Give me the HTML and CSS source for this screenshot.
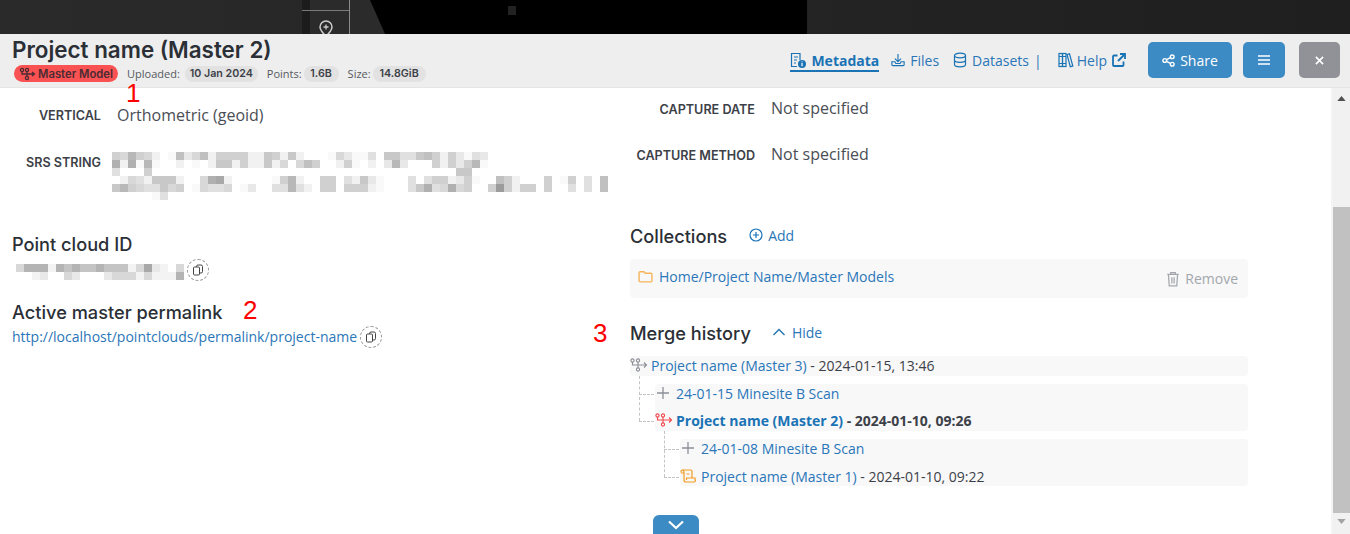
FILE: index.html
```html
<!DOCTYPE html>
<html lang="en">
<head>
<meta charset="utf-8">
<title>Project name</title>
<link rel="stylesheet" href="styles.css">
</head>
<body>
<div class="canvas">
  <div class="tool-strip">
    <svg class="pin" viewBox="0 0 14 18" width="14" height="18"><path d="M7 1a6 6 0 0 0-6 6c0 3.500 3.500 6.500 6 9.500 2.500-3 6-6 6-9.500a6 6 0 0 0-6-6z" fill="none" stroke="#ccc" stroke-width="1.500"/><path d="M7 4.500v5M4.500 7h5" stroke="#ccc" stroke-width="1.300"/></svg>
  </div>
  <svg class="black" viewBox="0 0 457 34" width="457" height="34"><rect width="35" height="34" fill="#2b2b2b"/><path d="M20 0H457V34H35z" fill="#000"/><rect x="158" y="6" width="8" height="9" fill="#222"/></svg>
</div>
<header class="head">
  <div class="head-left">
    <h1>Project name (Master 2)</h1>
    <div class="meta">
      <span class="badge">
        <svg viewBox="0 0 18 14" width="18" height="14"><g fill="none" stroke="#4a2a33" stroke-width="1.300"><circle cx="3" cy="3" r="1.600"/><circle cx="8" cy="3" r="1.600"/><circle cx="8" cy="11" r="1.600"/><path d="M3 5v2h12M8 5v4M13 5l2.500 2-2.500 2"/></g></svg>
        Master Model</span>
      <span class="lbl lbl-up">Uploaded:</span><span class="pill pill-up">10 Jan 2024</span>
      <span class="lbl lbl-pt">Points:</span><span class="pill pill-pt">1.6B</span>
      <span class="lbl lbl-sz">Size:</span><span class="pill pill-sz">14.8GiB</span>
    </div>
  </div>
  <nav class="nav">
    <a class="tab active">
      <svg viewBox="0 0 16 16" width="16" height="16"><g fill="none" stroke="#1a73b5" stroke-width="1.200"><path d="M10 8V1.500H1.500v13H7"/><path d="M4 5h4M4 8h3M4 11h2"/></g><circle cx="12" cy="12" r="4" fill="#1a73b5"/><path d="M12 11v3.200M12 9.500v.8" stroke="#fff" stroke-width="1.200"/></svg>
      Metadata</a>
    <a class="tab">
      <svg viewBox="0 0 16 16" width="14" height="16"><g fill="none" stroke="#1a73b5" stroke-width="1.300"><path d="M8 1v9M4.500 6.500 8 10l3.500-3.500"/><path d="M1 10v3.500a1 1 0 0 0 1 1h12a1 1 0 0 0 1-1V10h-3.500l-1 2h-5l-1-2z"/></g></svg>
      Files</a>
    <a class="tab">
      <svg viewBox="0 0 14 16" width="14" height="16"><g fill="none" stroke="#1a73b5" stroke-width="1.200"><ellipse cx="7" cy="3.500" rx="5.500" ry="2.300"/><path d="M1.500 3.500v9c0 1.300 2.500 2.300 5.500 2.300s5.500-1 5.500-2.300v-9M1.500 8c0 1.300 2.500 2.300 5.500 2.300s5.500-1 5.500-2.300"/></g></svg>
      Datasets</a>
    <span class="sep">|</span>
    <a class="tab help">
      <svg class="help-icon" viewBox="0 0 16 16" width="16" height="16"><g fill="none" stroke="#1a73b5" stroke-width="1.200"><rect x="1" y="1.500" width="3.500" height="13"/><rect x="4.500" y="1.500" width="3.500" height="13"/><path d="M9 2.500l2.500-.7 3.300 12.200-2.500.7z"/><path d="M1 4.500h7M1 11.500h7"/></g></svg>
      Help
      <svg viewBox="0 0 14 14" width="14" height="14"><g fill="none" stroke="#1a73b5" stroke-width="1.800"><path d="M11.500 8.500V12a1 1 0 0 1-1 1H2a1 1 0 0 1-1-1V3.500a1 1 0 0 1 1-1h3.500"/><path d="M8 1h5v5M13 1 6 8"/></g></svg>
    </a>
    <button class="btn share">
      <svg viewBox="0 0 14 14" width="13" height="13"><g fill="none" stroke="#fff" stroke-width="1.500"><circle cx="3" cy="7" r="2"/><circle cx="11" cy="3" r="2"/><circle cx="11" cy="11" r="2"/><path d="M5 6 9 4M5 8l4 2"/></g></svg>
      Share</button>
    <button class="btn menu"><svg viewBox="0 0 12 10" width="12" height="10"><path d="M0 1h12M0 5h12M0 9h12" stroke="#fff" stroke-width="1.500"/></svg></button>
    <button class="btn close"><svg viewBox="0 0 10 10" width="9" height="9"><path d="M1 1l8 8M9 1l-8 8" stroke="#fff" stroke-width="1.800"/></svg></button>
  </nav>
</header>
<div class="body">
  <main class="content">
    <section class="col-left">
      <div class="row row-vertical"><span class="key">VERTICAL</span><span class="val">Orthometric (geoid)</span></div>
      <div class="row row-srs"><span class="key">SRS STRING</span>
        <svg class="blur" viewBox="0 0 62 6" width="496" height="48" shape-rendering="crispEdges">
          <path fill="#9c9c9c" d="M48 4h1v1h-1z"/>
          <path fill="#a8a8a8" d="M13 3h1v1h-1z"/>
          <path fill="#b0b0b0" d="M0 1h1v1h-1zM2 1h1v1h-1zM12 3h1v1h-1zM39 4h1v1h-1zM42 4h1v1h-1z"/>
          <path fill="#b8b8b8" d="M2 0h1v1h-1zM4 1h1v1h-1zM35 1h1v1h-1zM45 1h1v1h-1zM22 3h1v2h-1zM1 4h1v1h-1z"/>
          <path fill="#c0c0c0" d="M8 0h1v1h-1zM11 0h1v1h-1zM39 0h1v1h-1zM24 1h1v1h-1zM48 3h1v1h-1zM61 3h1v2h-1z"/>
          <path fill="#c8c8c8" d="M19 0h1v1h-1zM22 0h1v1h-1zM34 0h2v1h-2zM38 0h1v1h-1zM13 1h2v1h-2zM19 1h1v1h-1zM43 2h2v1h-2zM5 3h3v1h-3zM31 3h1v1h-1zM0 4h1v1h-1zM6 4h1v1h-1zM38 4h1v1h-1z"/>
          <path fill="#d0d0d0" d="M0 0h1v1h-1zM3 0h1v1h-1zM13 0h4v1h-4zM20 0h1v1h-1zM40 0h1v2h-1zM42 0h1v2h-1zM16 1h1v1h-1zM25 1h1v1h-1zM29 1h1v1h-1zM44 1h1v1h-1zM4 2h1v1h-1zM21 3h1v1h-1zM26 3h2v2h-2zM40 3h2v1h-2zM44 3h1v2h-1zM49 3h1v2h-1zM54 3h1v2h-1zM57 3h1v1h-1zM2 4h1v1h-1zM8 4h1v1h-1zM29 4h3v1h-3zM47 4h1v1h-1zM51 4h2v1h-2z"/>
          <path fill="#d8d8d8" d="M1 0h1v1h-1zM4 0h1v1h-1zM10 0h1v1h-1zM28 0h1v1h-1zM21 1h1v1h-1zM23 1h1v1h-1zM2 3h1v1h-1zM11 3h1v2h-1zM3 4h1v1h-1zM7 4h1v1h-1zM14 4h1v1h-1zM41 4h1v1h-1zM43 4h1v1h-1z"/>
          <path fill="#e0e0e0" d="M32 0h1v1h-1zM36 0h2v1h-2zM45 0h1v1h-1zM0 2h1v1h-1zM3 3h1v1h-1zM29 3h1v1h-1zM37 3h1v2h-1zM39 3h1v1h-1zM59 3h1v2h-1zM4 4h2v1h-2zM12 4h2v1h-2zM20 4h2v1h-2zM23 4h1v1h-1zM40 4h1v1h-1zM57 4h1v1h-1zM6 5h1v1h-1z"/>
          <path fill="#e8e8e8" d="M9 0h1v1h-1zM29 0h1v1h-1zM43 0h1v2h-1zM46 0h1v1h-1zM34 1h1v1h-1zM36 1h1v1h-1zM32 3h1v1h-1zM43 3h1v1h-1zM17 4h1v1h-1z"/>
          <path fill="#f1f1f1" d="M5 0h1v1h-1zM12 0h1v1h-1zM17 0h2v1h-2zM21 0h1v1h-1zM23 0h1v1h-1zM41 0h1v2h-1zM1 1h1v1h-1zM8 1h1v1h-1zM12 1h1v1h-1zM15 1h1v1h-1zM17 1h2v1h-2zM20 1h1v1h-1zM28 1h1v1h-1zM32 1h1v1h-1zM1 3h1v1h-1zM4 3h1v1h-1zM8 3h1v1h-1zM14 3h1v1h-1zM23 3h1v1h-1zM30 3h1v1h-1zM42 3h1v1h-1zM50 3h1v2h-1zM24 4h1v1h-1zM32 4h1v1h-1z"/>
          <path fill="#f9f9f9" d="M7 0h1v1h-1zM27 0h1v1h-1zM30 0h2v1h-2zM44 0h1v1h-1zM3 1h1v1h-1zM5 1h1v1h-1zM10 1h1v1h-1zM30 1h1v1h-1zM46 1h1v1h-1zM20 3h1v1h-1zM33 3h1v2h-1zM45 3h1v1h-1zM56 3h1v1h-1zM10 4h1v1h-1zM16 4h1v1h-1zM5 5h1v1h-1z"/>
        </svg>
      </div>
      <h2 class="h-id">Point cloud ID</h2>
      <div class="copy-row">
        <svg class="blur" viewBox="0 0 21 2" width="168" height="16" shape-rendering="crispEdges">
          <path fill="#a8a8a8" d="M16 0h1v1h-1z"/>
          <path fill="#b4b4b4" d="M1 0h3v1h-3zM5 0h1v1h-1zM7 0h1v1h-1zM10 0h1v1h-1zM20 1h1v1h-1z"/>
          <path fill="#c4c4c4" d="M6 0h1v1h-1zM8 0h2v1h-2zM11 0h3v1h-3z"/>
          <path fill="#d8d8d8" d="M0 0h1v1h-1zM15 0h1v1h-1zM20 0h1v1h-1zM6 1h1v1h-1zM12 1h3v1h-3zM16 1h1v1h-1z"/>
          <path fill="#e8e8e8" d="M17 0h1v1h-1zM3 1h1v1h-1zM7 1h1v1h-1zM11 1h1v1h-1z"/>
          <path fill="#f3f3f3" d="M4 0h1v1h-1zM14 0h1v1h-1zM18 0h1v1h-1zM2 1h1v1h-1zM15 1h1v1h-1zM17 1h3v1h-3z"/>
        </svg>
        <span class="copy"><svg viewBox="0 0 12 12" width="12" height="12"><g fill="#fff" stroke="#444" stroke-width="1"><rect x="4.500" y="1" width="6" height="8" rx="1.500"/><rect x="1.500" y="3" width="6" height="8" rx="1"/></g></svg></span>
      </div>
      <h2 class="h-link">Active master permalink</h2>
      <div class="copy-row link-row"><a class="link">http://localhost/pointclouds/permalink/project-name</a>
        <span class="copy"><svg viewBox="0 0 12 12" width="12" height="12"><g fill="#fff" stroke="#444" stroke-width="1"><rect x="4.500" y="1" width="6" height="8" rx="1.500"/><rect x="1.500" y="3" width="6" height="8" rx="1"/></g></svg></span>
      </div>
    </section>
    <section class="col-right">
      <div class="row cap-date"><span class="key key-r">CAPTURE DATE</span><span class="val">Not specified</span></div>
      <div class="row cap-method"><span class="key key-r">CAPTURE METHOD</span><span class="val">Not specified</span></div>
      <div class="title-row tr-coll">
        <h2>Collections</h2>
        <a class="action add"><svg viewBox="0 0 14 14" width="14" height="14"><circle cx="7" cy="7" r="6" fill="none" stroke="#1a73b5" stroke-width="1.200"/><path d="M7 4v6M4 7h6" stroke="#1a73b5" stroke-width="1.200"/></svg>Add</a>
      </div>
      <div class="coll-box">
        <a class="coll-link"><svg viewBox="0 0 14 12" width="15" height="13"><path d="M1 2.500a1 1 0 0 1 1-1h3.500l1.300 1.500H12a1 1 0 0 1 1 1V10a1 1 0 0 1-1 1H2a1 1 0 0 1-1-1z" fill="none" stroke="#f6b45a" stroke-width="1.300"/></svg>Home/Project Name/Master Models</a>
        <span class="remove"><svg viewBox="0 0 12 14" width="14" height="16"><path d="M1 3h10M4 3V1.500h4V3M2 3l.7 10h6.600L10 3M5 5.500V11M7 5.500V11" fill="none" stroke="#a3a7ad" stroke-width="1.100"/></svg>Remove</span>
      </div>
      <div class="title-row tr-merge">
        <h2>Merge history</h2>
        <a class="action hide"><svg viewBox="0 0 14 8" width="14" height="8"><path d="M1.500 7 7 1.500 12.500 7" fill="none" stroke="#1a73b5" stroke-width="1.300"/></svg>Hide</a>
      </div>
      <div class="tree">
        <div class="node n1">
          <svg viewBox="0 0 18 14" width="18" height="14"><g fill="none" stroke="#8b8f96" stroke-width="1.100"><circle cx="2.500" cy="2.500" r="1.600"/><circle cx="8" cy="2.500" r="1.600"/><circle cx="8" cy="11.500" r="1.600"/><path d="M2.500 4.100V7H16.500M8 4.100v5.800M14 4.500 16.500 7 14 9.500"/></g></svg>
          <a>Project name (Master 3)</a><span>&nbsp;- 2024-01-15, 13:46</span>
        </div>
        <div class="group g1">
          <i class="dash-h d1"></i>
          <div class="node n2"><svg viewBox="0 0 12 12" width="12" height="12"><path d="M6 0v12M0 6h12" stroke="#8b8f96" stroke-width="1.300"/></svg><a>24-01-15 Minesite B Scan</a></div>
          <i class="dash-h d2"></i>
          <div class="node n3 current">
            <svg viewBox="0 0 18 14" width="18" height="14"><g fill="none" stroke="#f0474d" stroke-width="1.100"><circle cx="2.500" cy="2.500" r="1.600"/><circle cx="8" cy="2.500" r="1.600"/><circle cx="8" cy="11.500" r="1.600"/><path d="M2.500 4.100V7H16.500M8 4.100v5.800M14 4.500 16.500 7 14 9.500"/></g></svg>
            <a>Project name (Master 2)</a><span>&nbsp;- 2024-01-10, 09:26</span>
          </div>
        </div>
        <div class="group g2">
          <i class="dash-h d3"></i>
          <div class="node n4"><svg viewBox="0 0 12 12" width="12" height="12"><path d="M6 0v12M0 6h12" stroke="#8b8f96" stroke-width="1.300"/></svg><a>24-01-08 Minesite B Scan</a></div>
          <i class="dash-h d4"></i>
          <div class="node n5">
            <svg viewBox="0 0 16 14" width="16" height="14"><g fill="none" stroke="#f29b1f" stroke-width="1.200"><path d="M1 3.500V2.500a1.500 1.500 0 0 1 3 0V11a2 2 0 0 0 2 2h8a1.500 1.500 0 0 0 1-2.500V9H6.500v2"/><path d="M1 4h3M2.500 1h8a1.500 1.500 0 0 1 1.500 1.500V9M6.500 5h3"/></g></svg>
            <a>Project name (Master 1)</a><span>&nbsp;- 2024-01-10, 09:22</span>
          </div>
        </div>
      </div>
      <button class="scroll-btn"><svg viewBox="0 0 18 10" width="18" height="10"><path d="M2 1.500 9 8l7-6.500" fill="none" stroke="#fff" stroke-width="2.200"/></svg></button>
    </section>
  </main>
  <aside class="scrollbar">
    <svg class="arrow arrow-up" viewBox="0 0 10 6" width="9" height="5"><path d="M5 0 10 6H0z" fill="#505050"/></svg>
    <div class="track"><div class="thumb"></div></div>
    <svg class="arrow arrow-down" viewBox="0 0 10 6" width="9" height="5"><path d="M0 0H10L5 6z" fill="#a3a3a3"/></svg>
  </aside>
</div>
<span class="mark m1">1</span>
<span class="mark m2">2</span>
<span class="mark m3">3</span>
</body>
</html>
```
FILE: styles.css
```css
* { box-sizing: border-box; }
html, body { margin: 0; height: 534px; overflow: hidden; }
body { font-family: "Open Sans", "Noto Sans", sans-serif; font-size: 14px; color: #3c4148; background: #fff; display: flex; flex-direction: column; }
a { color: #2a76b8; text-decoration: none; }

.canvas { height: 34px; background: linear-gradient(90deg, #2a2a2a, #1f1f1f); position: relative; flex: none; overflow: hidden; }
.tool-strip { position: absolute; left: 302px; top: 0; width: 48px; height: 34px; background: #2b2b2b; border-left: 8px solid #1c1c1c; border-right: 1px solid #8a8a8a; }
.tool-strip::before { content: ""; position: absolute; left: -8px; right: 0; top: 10px; height: 1px; background: #7a7a7a; }
.pin { position: absolute; left: 9px; top: 20px; }
.black { position: absolute; left: 350px; top: 0; }

.head { height: 54px; flex: none; background: #eeeeee; border-bottom: 1px solid #e4e4e4; display: flex; justify-content: space-between; padding: 0 10px 0 12px; }
.head-left { display: flex; flex-direction: column; }
h1 { margin: 2px 0 0; font-family: "Inter", sans-serif; font-size: 22.400px; line-height: 27px; font-weight: 600; color: #2b2f36; white-space: nowrap; }
.meta { display: flex; align-items: center; margin-top: 2px; font-size: 11px; padding-left: 2px; }
.badge { display: inline-flex; align-items: center; gap: 1px; height: 17px; width: 104px; padding-left: 5px; border-radius: 9px; background: #fa5252; color: #4a2a33; font-family: "Inter", sans-serif; font-weight: 600; font-size: 11.300px; white-space: nowrap; }
.lbl { color: #55595f; }
.lbl-up { margin-left: 9px; margin-right: 5px; }
.lbl-pt { margin-left: 9px; margin-right: 2px; }
.lbl-sz { margin-left: 9px; margin-right: 2px; }
.pill { height: 16px; line-height: 16px; text-align: center; border-radius: 8px; background: #e2e2e2; color: #3c4148; font-family: "Inter", sans-serif; font-weight: 600; font-size: 10.700px; white-space: nowrap; }
.pill-up { width: 73px; }
.pill-pt { width: 35px; }
.pill-sz { width: 53px; }

.nav { display: flex; align-items: center; height: 52px; }
.tab { display: inline-flex; align-items: center; gap: 5px; height: 20px; font-size: 14px; color: #2a76b8; margin-right: 14px; white-space: nowrap; }
.tab.active { font-weight: 700; color: #1a73b5; border-bottom: 2px solid #1a73b5; height: 22px; margin-top: 2px; margin-right: 12px; }
.sep { color: #2a76b8; margin: 0 16px 0 -9px; }
.help { margin-right: 22px; }
.help-icon { margin-right: -2px; }
.btn { border: 0; height: 36px; border-radius: 5px; background: #3c8bc4; color: #fff; font: 14px "Open Sans", sans-serif; display: inline-flex; align-items: center; justify-content: center; padding: 0; }
.share { width: 84px; gap: 5px; }
.menu { width: 42px; margin-left: 11px; }
.close { width: 41px; margin-left: 14px; background: #909297; }

.body { flex: 1; display: flex; min-height: 0; }
.content { flex: 1; display: grid; grid-template-columns: 618px 630px; overflow: hidden; }
.col-left { padding-left: 12px; }
.row { display: flex; }
.key { font-family: "Inter", sans-serif; font-weight: 600; font-size: 12.600px; color: #3c4148; text-align: right; white-space: nowrap; }
.val { font-size: 16px; color: #4a4e55; white-space: nowrap; }
.row-vertical { margin-top: 16px; align-items: center; height: 22px; }
.row-vertical .key { width: 89px; }
.row-vertical .val { margin-left: 16px; }
.row-srs { margin-top: 26px; height: 48px; }
.row-srs .key { width: 89px; margin-top: 3px; }
.blur { display: block; flex: none; }
.row-srs .blur { margin-left: 11px; }
h2 { margin: 0; font-family: "Inter", sans-serif; font-size: 18.200px; font-weight: 500; color: #2b2f36; line-height: 22px; white-space: nowrap; }
.h-id { margin-top: 33px; }
.copy-row { display: flex; align-items: center; margin-top: 3px; height: 24px; }
.copy-row .blur { margin: 4px 0 0 4px; }
.copy { width: 22px; height: 22px; flex: none; display: flex; align-items: center; justify-content: center; border: 1px dashed #9a9a9a; border-radius: 50%; margin-left: 3px; }
.h-link { margin-top: 19px; }
.link { font-size: 14px; white-space: nowrap; padding-bottom: 2px; }
.link-row { margin-top: 2px; }

.col-right { padding-left: 12px; }
.cap-date, .cap-method { align-items: center; }
.key-r { width: 125px; margin-top: 2px; }
.cap-date { margin-top: 9px; height: 22px; }
.cap-method { margin-top: 24px; height: 22px; }
.col-right .val { margin-left: 16px; }
.title-row { display: flex; align-items: center; }
.tr-coll { margin-top: 59px; height: 24px; }
.action { display: inline-flex; align-items: center; gap: 5px; font-size: 14px; margin-left: 22px; padding-bottom: 2px; }
.tr-merge .action { gap: 6px; margin-left: 21px; }
.coll-box { margin-top: 11px; height: 39px; width: 618px; background: #f8f8f8; border-radius: 4px; display: flex; justify-content: space-between; padding: 0 10px 0 8px; }
.coll-link { display: inline-flex; align-items: center; gap: 6px; font-size: 14px; height: 34px; }
.remove { display: inline-flex; align-items: center; gap: 5px; color: #a3a7ad; font-size: 14px; }
.tr-merge { margin-top: 23px; height: 24px; }

.tree { position: relative; margin-top: 11px; font-size: 14px; }
.node { display: flex; align-items: center; white-space: nowrap; }
.node svg { flex: none; }
.node span { color: #3c4148; }
.n1 { height: 20px; width: 618px; background: #f8f8f8; border-radius: 4px; padding-bottom: 2px; }
.n1 svg { margin-right: 3px; }
.n1::before { content: ""; position: absolute; left: 9px; top: 20px; height: 45px; border-left: 1px dashed #c4c4c4; }
.group { position: relative; background: #f8f8f8; border-radius: 4px; }
.g1 { margin: 8px 0 0 25px; width: 593px; height: 47px; }
.g2 { margin: 8px 0 0 50px; width: 568px; height: 47px; }
.n2, .n4 { height: 20px; padding: 0 0 2px 2px; }
.n2 svg, .n4 svg { margin-right: 7px; }
.n3 { height: 27px; padding-top: 5px; }
.n3 svg { margin-right: 3px; }
.n5 { height: 27px; padding-top: 7px; }
.n5 svg { margin-right: 5px; }
.current a { font-weight: 700; color: #1a73b5; }
.current span { font-weight: 700; color: #3c4148; }
.dash-h { position: absolute; left: -16px; width: 15px; border-top: 1px dashed #c4c4c4; }
.d1 { top: 10px; }
.d2 { top: 37px; }
.d3 { top: 10px; }
.d4 { top: 38px; }
.g2::before { content: ""; position: absolute; left: -16px; top: -8px; height: 46px; border-left: 1px dashed #c4c4c4; }

.scroll-btn { display: flex; align-items: center; justify-content: center; margin: 29px 0 0 23px; width: 46px; height: 30px; padding: 0 0 10px; border: 0; border-radius: 6px 6px 0 0; background: #3c8bc4; }

.mark { position: absolute; color: #ff0000; font-family: "Liberation Sans", sans-serif; font-size: 26px; line-height: 20px; }
.m1 { left: 126px; top: 83px; }
.m2 { left: 243px; top: 300px; }
.m3 { left: 593px; top: 323px; }

.scrollbar { width: 19px; flex: none; background: #f1f1f1; display: flex; flex-direction: column; align-items: center; border-left: 2px solid #f4f4f4; }
.arrow { flex: none; }
.arrow-up { margin: 8px 0 6px; }
.arrow-down { margin: 6px 0 10px; }
.track { flex: 1; width: 100%; padding-top: 100px; }
.thumb { height: 306px; background: #c1c1c1; }
```
